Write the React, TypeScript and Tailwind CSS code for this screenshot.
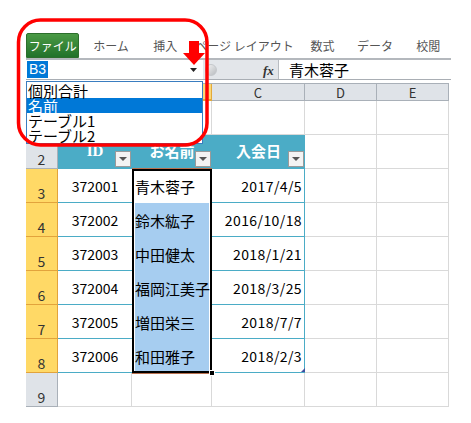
import React from "react";

const JP = { fontFamily: '"Noto Sans CJK JP", "Noto Sans", sans-serif' };

function FilterBtn() {
  return (
    <div className="absolute right-[1px] bottom-[2px] w-[16px] h-[16px] bg-[#f3f3f3] border border-[#9a9a9a] flex items-center justify-center">
      <svg width="8" height="5" viewBox="0 0 8 5">
        <path d="M0 0 L8 0 L4 4 Z" fill="#555" />
      </svg>
    </div>
  );
}

type Row = { id: string; name: string; date: string };
const rows: Row[] = [
  { id: "372001", name: "青木蓉子", date: "2017/4/5" },
  { id: "372002", name: "鈴木紘子", date: "2016/10/18" },
  { id: "372003", name: "中田健太", date: "2018/1/21" },
  { id: "372004", name: "福岡江美子", date: "2018/3/25" },
  { id: "372005", name: "増田栄三", date: "2018/7/7" },
  { id: "372006", name: "和田雅子", date: "2018/2/3" },
];

const tabs = [
  { t: "ホーム", w: "w-[64px]" },
  { t: "挿入", w: "w-[46px]" },
  { t: "ページ レイアウト", w: "w-[114px]" },
  { t: "数式", w: "w-[44px]" },
  { t: "データ", w: "w-[62px]" },
  { t: "校閲", w: "w-[46px]" },
];

export default function App() {
  return (
    <div className="relative w-[471px] h-[423px] bg-white overflow-hidden" style={JP}>
      {/* Ribbon tabs */}
      <div className="pt-[33px] pl-[26px] w-[451px]">
        <div className="flex h-[25px] items-stretch">
          <div className="w-[54px] rounded-t-[2px] bg-gradient-to-b from-[#4a9a45] to-[#21722a] border border-[#2c6e2c] text-white text-[12px] flex items-center justify-center leading-none">
            ファイル
          </div>
          {tabs.map((t) => (
            <div key={t.t} className={`${t.w} flex items-center justify-center text-[12px] text-[#555] leading-none whitespace-nowrap`}>
              {t.t}
            </div>
          ))}
        </div>
        <div className="h-[2px] bg-[#b4b8bd]" />
        {/* Formula bar */}
        <div className="flex h-[20px] border-b border-[#a9aeb4]">
          <div className="w-[177px] bg-white flex items-center pl-[1px] relative">
            <span className="bg-[#0078d7] text-white text-[14px] leading-[17px] px-[2px]" style={{ fontFamily: '"Liberation Sans", sans-serif' }}>B3</span>
            <svg className="absolute left-[164px] top-[8px]" width="7" height="4" viewBox="0 0 7 4">
              <path d="M0 0 L7 0 L3.5 4 Z" fill="#222" />
            </svg>
          </div>
          <div className="w-[76px] bg-[#e3e6ea] relative border-r border-[#b8bcc1]">
            <div className="absolute left-[2px] top-[4px] w-[12px] h-[12px] rounded-full bg-gradient-to-br from-[#f4f4f4] to-[#b9bcc0] border border-[#c5c8cc]" />
            <span className="absolute left-[60px] top-[1px] text-[13px] italic font-bold text-[#333]" style={{ fontFamily: '"Liberation Serif", serif' }}>fx</span>
          </div>
          <div className="flex-1 bg-white pl-[10px] text-[15px] leading-[19px] text-black">青木蓉子</div>
        </div>
      </div>

      {/* Grid */}
      <div className="mt-[3px] ml-[26px] w-[423px]">
        {/* column headers */}
        <div className="flex h-[18px] border-t border-[#a9b0b8] text-[13px] text-[#333] leading-none">
          <div className="w-[32px] bg-[#dfe3e8] border-r border-b border-[#a9b0b8]" />
          <div className="w-[74px] bg-[#dfe3e8] border-r border-b border-[#a9b0b8] flex items-center justify-center">A</div>
          <div className="w-[80px] bg-[#f9d878] border-r border-b-2 border-[#e3a93a] flex items-center justify-center">B</div>
          <div className="w-[93px] bg-[#dfe3e8] border-r border-b border-[#a9b0b8] flex items-center justify-center">C</div>
          <div className="w-[72px] bg-[#dfe3e8] border-r border-b border-[#a9b0b8] flex items-center justify-center">D</div>
          <div className="w-[72px] bg-[#dfe3e8] border-r border-b border-[#a9b0b8] flex items-center justify-center">E</div>
        </div>

        {/* row 1 */}
        <div className="flex h-[34px]">
          <div className="w-[32px] bg-[#dfe3e8] border-r border-b border-[#a9b0b8] flex items-end justify-center text-[14px] text-[#333] leading-none pb-[2px]">1</div>
          <div className="w-[74px] border-r border-b border-[#d9d9d9]" />
          <div className="w-[80px] border-r border-b border-[#d9d9d9]" />
          <div className="w-[93px] border-r border-b border-[#d9d9d9]" />
          <div className="w-[72px] border-r border-b border-[#d9d9d9]" />
          <div className="w-[72px] border-r border-b border-[#d9d9d9]" />
        </div>

        {/* row 2 header */}
        <div className="flex h-[34px]">
          <div className="w-[32px] bg-[#dfe3e8] border-r border-b border-[#a9b0b8] flex items-end justify-center text-[14px] text-[#333] leading-none pb-[2px]">2</div>
          <div className="w-[74px] bg-[#4bacc6] relative flex items-center justify-center text-white font-bold text-[15px] pb-[1px]" style={{ fontFamily: '"Liberation Serif", serif' }}>
            ID
            <FilterBtn />
          </div>
          <div className="w-[80px] bg-[#4bacc6] relative flex items-center justify-center text-white font-bold text-[15px] pb-[1px]">
            お名前
            <FilterBtn />
          </div>
          <div className="w-[93px] bg-[#4bacc6] relative flex items-center justify-center text-white font-bold text-[15px] pb-[1px]">
            入会日
            <FilterBtn />
          </div>
          <div className="w-[72px] border-r border-b border-[#d9d9d9]" />
          <div className="w-[72px] border-r border-b border-[#d9d9d9]" />
        </div>

        {/* data rows */}
        {rows.map((r, i) => (
          <div key={r.id} className="flex h-[34px]">
            <div className="w-[32px] bg-[#ffd966] border-r border-b border-[#e2a33c] flex items-end justify-center text-[14px] text-[#333] leading-none pb-[2px]">
              {i + 3}
            </div>
            <div className="w-[74px] border-b border-[#4bacc6] flex items-center justify-center text-[14px] text-black pt-[2px]">{r.id}</div>
            <div className={`w-[80px] h-full ${i === 0 ? "bg-white" : "px-[3px]"}`}>
              <div className={`h-full w-full flex items-center pt-[2px] text-[15px] text-black whitespace-nowrap ${i === 0 ? "pl-[3px]" : "bg-[#a6cdf0]"}`}>
                {r.name}
              </div>
            </div>
            <div className="w-[93px] border-r border-b border-[#4bacc6] flex items-center justify-end pr-[2px] text-[14px] text-black tracking-[0.4px] pt-[2px]">
              {r.date}
            </div>
            <div className="w-[72px] border-r border-b border-[#d9d9d9]" />
            <div className="w-[72px] border-r border-b border-[#d9d9d9]" />
          </div>
        ))}

        {/* row 9 */}
        <div className="flex h-[34px]">
          <div className="w-[32px] bg-[#dfe3e8] border-r border-b border-[#a9b0b8] flex items-end justify-center text-[14px] text-[#333] leading-none pb-[2px]">9</div>
          <div className="w-[74px] border-r border-b border-[#d9d9d9]" />
          <div className="w-[80px] border-r border-b border-[#d9d9d9]" />
          <div className="w-[93px] border-r border-b border-[#d9d9d9]" />
          <div className="w-[72px] border-r border-b border-[#d9d9d9]" />
          <div className="w-[72px] border-r border-b border-[#d9d9d9]" />
        </div>
      </div>

      {/* selection border */}
      <div className="absolute left-[132px] top-[168px] w-[80px] h-[1px] bg-[#b8704f]" />
      <div className="absolute left-[132px] top-[373px] w-[80px] h-[1px] bg-[#b8704f]" />
      <div className="absolute left-[132px] top-[169px] w-[80px] h-[204px] border-2 border-black" />
      <div className="absolute left-[209px] top-[370px] w-[6px] h-[6px] bg-black border border-white" />
      <svg className="absolute left-[301px] top-[368px]" width="4" height="4" viewBox="0 0 4 4">
        <path d="M4 0 L4 4 L0 4 Z" fill="#3f4fa0" />
      </svg>

      {/* name box dropdown list */}
      <div className="absolute left-[26px] top-[81px] w-[177px] h-[63px] bg-white border border-[#3a7dc0] pt-[1px] text-[15px] text-black">
        <div className="h-[15px] leading-[15px] pl-[1px]">個別合計</div>
        <div className="h-[15px] leading-[15px] pl-[1px] bg-[#0078d7] text-white">名前</div>
        <div className="h-[15px] leading-[15px] pl-[1px]">テーブル1</div>
        <div className="h-[15px] leading-[15px] pl-[1px]">テーブル2</div>
      </div>

      {/* red annotation */}
      <svg className="absolute left-0 top-0 pointer-events-none" width="471" height="423" viewBox="0 0 471 423">
        <rect x="18.5" y="20" width="188.5" height="125" rx="22" ry="22" fill="none" stroke="#ff0000" strokeWidth="3.5" />
        <path d="M189 41 L199 41 L199 53 L205 53 L194 65 L183 53 L189 53 Z" fill="#ff0000" />
      </svg>
    </div>
  );
}
